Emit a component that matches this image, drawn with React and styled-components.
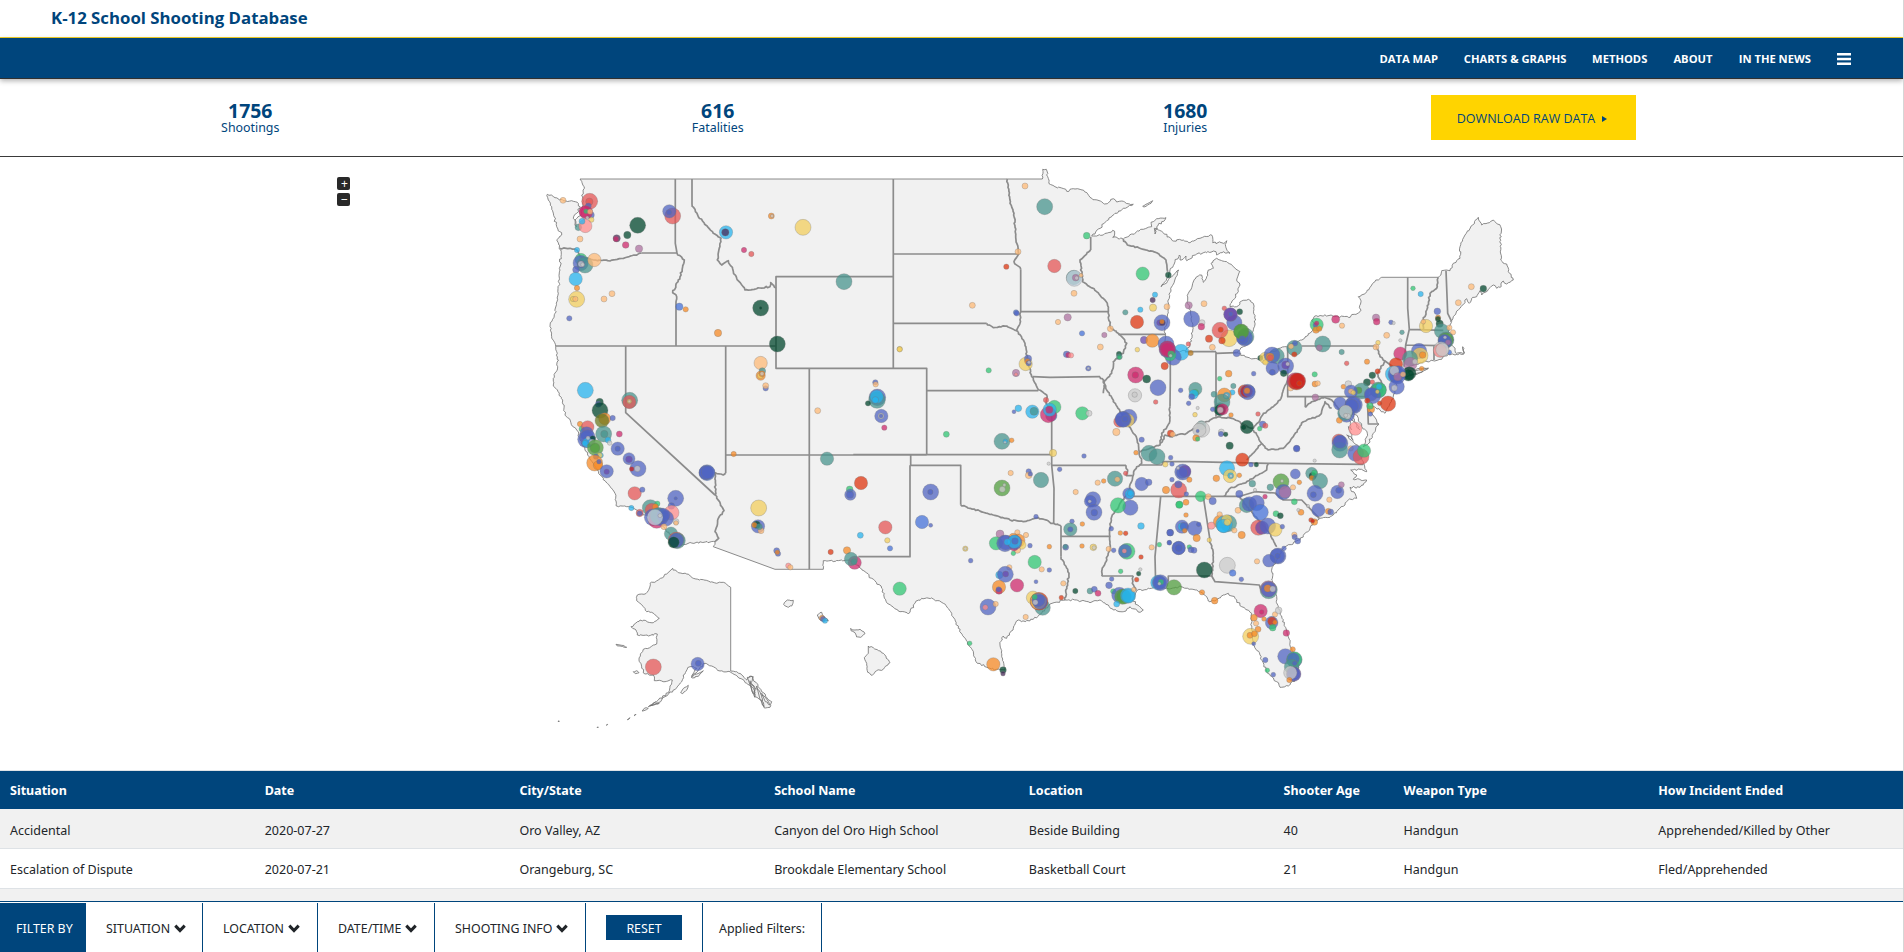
import React from 'react';
import styled, { createGlobalStyle } from 'styled-components';

const navy = '#00457c';
const sans = '"Open Sans", "Noto Sans", sans-serif';
const ui = '"Noto Sans", "Open Sans", sans-serif';

const Global = createGlobalStyle`
  * { box-sizing: border-box; }
  body { margin: 0; background: #fff; color: #212529; font-family: ${ui}; overflow: hidden; }
`;
const Page = styled.div`
  height: 952px;
  display: flex;
  flex-direction: column;
  border-right: 1px solid #d6d6d6;
  overflow: hidden;
`;
const Brand = styled.header`
  height: 38px;
  flex: none;
  padding: 0 0 0 51px;
  border-bottom: 1px solid #f2d024;
  color: ${navy};
  font: 700 16.8px/35px ${sans};
  white-space: nowrap;
`;
const Nav = styled.nav`
  height: 41px;
  flex: none;
  display: flex;
  align-items: center;
  justify-content: flex-end;
  gap: 25.3px;
  padding: 2px 52px 0 0;
  background: ${navy};
  border-bottom: 1px solid #303030;
  box-shadow: 0 2px 5px rgba(0, 0, 0, 0.3);
`;
const NavLink = styled.a`
  color: #fff;
  font: 700 11.2px/20px ${sans};
  white-space: nowrap;
  width: ${(p) => p.$w}px;
`;
const Burger = () => (
  <svg width="14" height="12" viewBox="0 0 14 12" fill="#fff">
    <rect width="14" height="2.5" />
    <rect y="4.8" width="14" height="2.5" />
    <rect y="9.5" width="14" height="2.5" />
  </svg>
);
const Stats = styled.section`
  height: 78px;
  flex: none;
  display: grid;
  grid-template-columns: repeat(4, 467.5px);
  padding-left: 16px;
  border-bottom: 1px solid #3a3a3a;
`;
const Stat = styled.div`
  padding: 22px 0 0 1px;
  text-align: center;
  color: ${navy};
  font: 400 12.4px/14px ${ui};
`;
const Figure = styled.div`
  font: 700 19.4px/19px ${ui};
  padding-bottom: 1px;
`;
const Download = styled.button`
  width: 205px;
  height: 45px;
  margin: 16px 0 0 12px;
  padding: 2px 2px 0 0;
  border: 0;
  background: #ffd400;
  color: ${navy};
  font: 400 12.5px/20px ${sans};
  display: flex;
  align-items: center;
  justify-content: center;
  gap: 7px;
  white-space: nowrap;
`;
const Arrow = styled.i`
  border: solid transparent;
  border-width: 3px 0 3px 5px;
  border-left-color: ${navy};
`;
const MapArea = styled.section`
  height: 613px;
  flex: none;
  position: relative;
`;
const MapSvg = styled.svg`
  display: block;
`;
const ZoomControls = styled.div`
  position: absolute;
  left: 337px;
  top: 20px;
  display: grid;
  gap: 3px;
`;
const ZoomButton = styled.button`
  width: 13px;
  height: 13px;
  padding: 1px 0 0 2px;
  border: 0;
  border-radius: 2px;
  background: #292929;
  color: #fff;
  font: 400 12px/12px ${ui};
`;
const Table = styled.div`
  flex: none;
  height: 131px;
  overflow: hidden;
  border-top: 1px solid #dee2e6;
`;
const Row = styled.div`
  display: grid;
  grid-template-columns: repeat(5, 1fr) 120px repeat(2, 1fr);
  height: ${(p) => (p.$head ? 38 : 40)}px;
  background: ${(p) => (p.$head ? navy : p.$striped ? '#f1f1f1' : '#fff')};
  color: ${(p) => (p.$head ? '#fff' : '#212529')};
  font: ${(p) => (p.$head ? 700 : 400)} 12.5px/${(p) => (p.$head ? 39 : p.$striped ? 43 : 41)}px ${ui};
  border-bottom: ${(p) => (p.$head ? 0 : 1)}px solid #dee2e6;
`;
const Cell = styled.div`
  padding-left: 10px;
  white-space: nowrap;
`;
const FilterBar = styled.footer`
  flex: none;
  height: 51px;
  display: flex;
  padding-top: 1px;
  border-top: 1px solid ${navy};
  background: #fff;
`;
const Filter = styled.div`
  width: ${(p) => p.$w}px;
  display: flex;
  align-items: center;
  justify-content: ${(p) => (p.$center ? 'center' : 'flex-start')};
  gap: 4px;
  padding-top: ${(p) => (p.$center ? 0 : 2)}px;
  padding-left: ${(p) => (p.$center ? 0 : p.$pad || 20)}px;
  border-right: 1px solid ${navy};
  background: ${(p) => (p.$active ? navy : 'transparent')};
  color: ${(p) => (p.$active ? '#fff' : '#212529')};
  font: 400 12.4px/20px ${ui};
  white-space: nowrap;
`;
const Reset = styled.button`
  width: 76px;
  height: 25px;
  border: 0;
  background: ${navy};
  color: #fff;
  font: 400 12.4px/20px ${ui};
  padding: 2px 0 0;
`;
const Chevron = () => (
  <svg width="12" height="9" viewBox="0 0 12 9">
    <path d="M1.3 1.6 L6 6.6 L10.7 1.6" fill="none" stroke="#212529" strokeWidth="3" />
  </svg>
);

// Each sheet has its own origin; sheet coordinates are thirds of a pixel.
const SHEETS = {
  NW: [530, 160], SW: [530, 350], AK: [540, 560], NC: [890, 160],
  GL: [1080, 220], NE: [1280, 200], SC: [890, 380], SE: [1160, 400],
};

const project = (sheet, text) => {
  const [ox, oy] = SHEETS[sheet];
  return text.trim().split(/\s+/).map((pair) => {
    const [x, y] = pair.split(',').map(Number);
    return [ox + x / 3, oy + y / 3];
  });
};

// Small deterministic wobble that gives coasts and rivers a natural edge.
const roughen = (pts, amount) => {
  let seed = 7;
  const rnd = () => {
    seed = (seed * 16807) % 2147483647;
    return seed / 2147483647 - 0.5;
  };
  const out = [pts[0]];
  for (let i = 1; i < pts.length; i += 1) {
    const [ax, ay] = pts[i - 1];
    const [bx, by] = pts[i];
    const len = Math.hypot(bx - ax, by - ay);
    const straight = len > 45;
    const n = straight ? 1 : Math.max(1, Math.round(len / 2));
    for (let k = 1; k <= n; k += 1) {
      const t = k / n;
      const j = straight || k === n ? 0 : amount;
      out.push([ax + (bx - ax) * t + rnd() * j, ay + (by - ay) * t + rnd() * j]);
    }
  }
  return out;
};
const toPath = (pts) => 'M' + pts.map(([x, y]) => `${x.toFixed(1)} ${y.toFixed(1)}`).join('L');

const MAINLAND = [
  ['NW', '150,57 1090,57'],
  ['NC', '457,57 458,28 469,28 473,50 478,72 495,80 515,84 530,94 550,86 580,90 600,112 640,130 655,128 670,116 680,126 700,124 730,133 705,145 675,160 650,182 625,207 605,228 620,228 640,225 668,211 674,222 668,232 700,237 725,222 760,208 785,200 783,187 800,176 828,173 815,185 800,200 795,222 793,205 820,218 850,243 880,240 900,248 930,235'],
  ['GL', '395,45 398,68 435,68 440,62 437,80 450,100 430,95 410,105 408,95 380,98 350,102 320,122 318,108 300,120 298,105 285,125 270,150 265,172 255,185 243,200 262,185 296,150 288,170 272,205 265,240 262,290 255,330 256,345 258,370 270,390 300,395 315,392 330,375 338,330 335,290 322,245 325,220 338,190 355,168 365,165 370,187 380,170 385,150 400,145 393,130 410,115 440,125 460,140 480,155 470,180 480,195 475,215 460,240 450,260 470,260 485,243 505,238 520,250 527,300 515,340 508,365 490,380 470,398 495,410 535,418 560,400 600,385'],
  ['NE', '20,440 65,420 100,390 105,375 95,360 105,348 150,346 205,352 240,335 243,305 235,290 260,275 285,245 305,232 475,232 485,212 510,212 520,190 540,175 540,140 555,105 595,52 605,75 640,60 662,80 662,180 680,192 685,215 700,240 680,252 670,243 660,262 650,265 640,255 625,268 605,285 600,272 590,290 575,295 568,310 560,296 555,308 540,325 520,350 510,375 505,395 515,400 520,420 505,425 520,440 530,460 553,458 548,440 552,462 525,465 505,462 485,478 460,482 420,487 395,497 375,508 445,505 415,520 370,530 350,545 345,580 330,610 315,640 300,630 280,620 262,585 262,610 275,640 297,672 280,700 262,735 250,740 262,700 245,680 230,645 215,640 240,690 222,665 205,650 215,690 205,680 220,720 200,705 240,745'],
  ['SE', '600,160 610,185 620,215 600,208 572,210 590,225 580,238 620,240 600,262 570,262 590,295 565,300 540,325 520,345 510,352 480,355 462,362 450,385 420,420 370,445 350,480 338,500 335,540 345,580 355,620 375,680 395,745 415,790 415,830 385,858 360,862 350,845 320,815 300,765 280,735 275,690 275,640 245,620 225,595 205,580 190,585 165,603 145,603 140,590 110,570 65,560 20,565'],
  ['SC', '800,620 775,625 740,632 735,645 725,660 760,690 750,697 720,680 700,695 670,690 655,675 630,660 600,668 560,660 525,660 480,672 455,700 430,718 395,725 385,720 370,745 350,775 340,768 330,795 335,830 345,870 320,868 290,862 262,850 240,800 205,745 185,700 160,670 130,657 95,655 75,670 55,702'],
  ['AK', '1080,155 1040,128 1025,85 995,55 950,15'],
  ['SW', '970,632 880,632 880,658 735,658 550,590 555,575 445,583 430,565 405,535 370,505 340,495 320,480 290,470 258,467 255,430 240,410 210,375 190,340 165,300 150,270 140,240 105,195 98,150 70,105 70,85 83,50 82,10'],
  ['NW', '77,560 65,530 60,500 75,460 85,400 90,330 92,270 80,240 95,225 80,200 65,140 55,120 52,103 75,113 100,122 125,122 145,130 150,145 130,175 140,200 135,180 155,160 160,125 155,105 163,80 150,57'],
];

const ISLANDS = [
  ['AK', '398,25 415,38 440,42 460,55 505,63 530,70 550,67 572,82 572,333 590,335 605,345 620,360 633,348 650,370 665,395 695,425 690,442 672,443 665,420 645,410 640,385 620,370 600,355 572,337 540,333 520,320 495,310 475,330 455,350 470,325 450,320 430,345 425,365 400,390 375,410 355,428 325,440 355,420 385,398 390,378 397,360 375,365 343,362 340,345 315,342 305,325 297,300 310,268 350,252 352,222 325,228 292,225 288,210 273,200 300,180 340,188 358,175 335,157 320,155 310,140 290,122 292,105 312,103 325,92 330,70 355,60 380,42'],
  ['AK', '733,128 742,120 760,121 755,138 745,142 731,134'],
  ['AK', '832,165 845,157 852,170 865,183 850,183 838,178'],
  ['AK', '932,205 945,210 960,208 975,221 965,230 950,231 945,218 933,212'],
  ['AK', '985,258 1000,263 1030,280 1050,308 1030,328 1010,332 997,346 983,337 980,315 973,293 985,280'],
  ['AK', '228,253 240,258 260,262 245,256'],
  ['AK', '280,335 290,332 297,338 286,341'],
  ['AK', '422,398 435,382 445,376 440,390 428,401'],
  ['AK', '454,352 470,342 490,332 478,345 458,354'],
  ['AK', '622,352 640,350 632,370 648,388 640,402'],
  ['AK', '630,362 642,382 644,412 636,395'],
  ['AK', '650,378 662,402 672,440 660,418'],
  ['AK', '665,400 680,418 690,435 676,425'],
  ['AK', '306,453 318,443 325,445 312,452'],
  ['AK', '330,437 345,428 358,430 340,436'],
  ['AK', '262,479 270,473 266,478'],
  ['AK', '282,466 288,463 284,467'],
  ['AK', '54,483 58,483 56,486'],
  ['AK', '171,502 175,501 173,504'],
  ['AK', '199,495 203,493 201,496'],
  ['NC', '758,139 788,122 783,130 762,141'],
  ['NE', '385,515 445,505 420,518 390,525'],
];

const BORDERS = [
  ['NW', '436,57 436,250 441,279'], ['NW', '438,432 438,558'], ['NW', '77,558 738,558'],
  ['NW', '287,558 287,758 555,1005'], ['NW', '587,558 587,940'], ['NW', '486,57 486,132'],
  ['NW', '1090,350 738,350 738,625 1190,625 1190,884'], ['NW', '1090,57 1090,625'],
  ['NW', '335,279 441,279'], ['SW', '587,315 1190,315'], ['SW', '838,55 838,658'],
  ['SC', '-110,224 485,224'], ['SC', '62,224 62,256 212,256 212,374'], ['SC', '60,256 60,530 -95,530'],
  ['SC', '110,32 445,32'], ['SC', '485,95 485,256 492,325 491,432'], ['SC', '513,437 513,530'],
  ['SC', '485,256 708,256'], ['SC', '708,287 728,287'], ['SC', '513,469 660,469'], ['SC', '635,588 730,588'],
  ['SC', '748,255 815,255 820,245 900,245'], ['SE', '90,185 325,190 610,193'],
  ['SC', '730,349 1050,349'], ['SE', '240,289 285,275 345,279 370,300 425,300 478,355'],
  ['SC', '812,349 795,530 797,615'], ['SE', '25,545 25,528 155,528 165,545 298,555 302,568 325,560'],
  ['SE', '130,290 150,420'], ['SC', '841,0 840,80'], ['GL', '271,390 271,485'],
  ['GL', '408,395 408,590'], ['GL', '315,395 408,395'], ['GL', '408,400 470,398'],
  ['NE', '23,440 23,590 262,590'], ['NE', '65,438 290,438'],
  ['NE', '383,232 383,325 388,388 377,435 372,500'], ['NE', '388,388 490,391'],
  ['NE', '377,435 480,437'], ['NE', '462,437 462,480'], ['NE', '498,212 503,340 515,365'],
  ['NE', '315,483 345,505'], ['NE', '262,590 265,672 295,672'], ['NE', '76,590 76,622'],
  ['NC', '10,282 385,282'], ['NC', '392,328 392,455 654,455'], ['NC', '10,490 290,490'],
  ['NC', '428,650 480,652 630,650'], ['NC', '602,230 602,270'], ['NC', '685,523 827,523'],
];

const RIVERS = [
  ['NW', '90,265 120,265 140,270 150,290 190,300 240,303 290,292 335,279'],
  ['NW', '441,279 463,300 450,350 428,398 440,410 438,432'],
  ['NW', '486,132 505,170 550,220 573,235 562,300 575,315 595,302 620,355 645,390 720,380 722,368 738,384'],
  ['SW', '587,370 580,375 555,368 556,435 582,482 565,505 555,545 566,565 555,575'],
  ['SC', '212,374 240,385 310,405 360,420 400,425 445,413 490,430 513,437'],
  ['NC', '385,515 405,550 412,600 425,650 445,689 470,705 468,730 485,755'],
  ['SC', '513,530 537,580 530,620 525,660'],
  ['SC', '708,256 713,270 708,287'],
  ['SC', '640,0 650,30 690,95 740,175 748,215 755,250 740,260 728,290 715,340 690,370 665,410 658,450 660,510 640,560 635,588'],
  ['SC', '730,588 727,610 738,632'],
  ['SE', '325,190 320,210 250,250 210,265 192,289'],
  ['SE', '150,420 160,460 155,528'],
  ['SE', '240,289 260,320 295,360 325,395 350,440'],
  ['SC', '748,215 780,205 810,195 825,165 840,170 890,160 930,135 960,120 990,110 1025,115 1065,135 1090,145 1110,120 1120,100 1150,80 1170,60 1180,30 1193,0'],
  ['SC', '840,80 838,130 815,160 810,195'],
  ['NE', '290,438 300,470 315,483 290,520 310,560 262,590'],
  ['NE', '475,232 470,265 450,280 440,330 430,360 430,388'],
  ['NE', '76,622 95,605 135,592 155,600 175,625 205,650'],
  ['NE', '155,625 135,605 120,645 70,665 40,710 10,745 -35,750 -55,730 -80,690'],
  ['SE', '305,130 260,180'],
  ['NC', '352,57 360,130 372,160 378,240 386,282 372,305 392,328'],
  ['NC', '290,490 310,503 350,498 385,515'],
  ['NC', '392,455 390,490 380,510'],
  ['NC', '630,650 645,665'],
  ['NC', '602,270 570,300 578,365 620,395 652,430 660,500 690,525 710,550 700,580 670,605 665,640 642,665 640,700'],
  ['NC', '700,237 712,255 800,278 828,300 833,335'],
];

const COLORS = {
  b: '#5064c2', B: '#4671d8', r: '#e45656', d: '#02472e', t: '#48948e', o: '#f58a25', e: '#fdba77',
  s: '#27b3ed', y: '#f2cd5d', g: '#30c573', m: '#cd2a6c', R: '#dd3510', k: '#ff8c8c', v: '#ad71a0',
  w: '#cacaca', G: '#529d3f', p: '#6a4aac', P: '#4a2c5a', c: '#c91f1f', O: '#b7791f', n: '#c4d0dc', l: '#6d7a22',
};

// Incidents per sheet as x,y,radius,colour.
const INCIDENTS = {
  NW: `99,121,9,e 179,124,24,r 178,125,11,r 175,138,9,b 183,165,10,b 184,179,8,y 168,157,20,m 165,155,18,m 168,154,7,g 180,155,8,e 172,173,5,w
    145,202,10,t 166,198,20,k 156,184,9,s 150,237,9,e 323,196,24,d 292,225,11,d 260,235,11,P 258,237,8,m 287,255,10,m 327,266,11,v
    428,168,24,r 418,154,20,b 417,157,8,b 141,270,8,s 153,298,18,g 152,309,23,b 165,315,24,t 153,313,11,b 153,312,9,w 158,314,6,w 193,300,20,e
    138,329,10,b 137,357,20,s 141,384,8,o 140,418,24,y 129,417,8,y 136,417,8,e 222,417,9,e 246,401,9,e 118,475,8,b
    448,440,11,B 467,448,8,o 564,519,11,o 588,217,20,s 586,217,11,P 642,270,8,m 664,282,8,r 724,168,9,o 726,168,5,w 819,202,24,y
    942,365,24,t 692,444,24,d 692,444,5,d 742,552,24,d 1109,567,8,y`,
  SW: `692,39,20,e 697,63,10,t 692,77,14,o 691,77,9,y 696,71,9,o 696,71,6,w 707,115,8,b 707,107,9,e 863,182,9,e 611,312,8,o
    166,121,24,s 209,156,11,d 205,163,9,b 210,181,24,d 224,206,18,o 216,212,21,l 248,204,8,b 150,222,8,o 155,237,8,g 173,231,19,r 170,250,20,b 168,268,25,b 173,262,23,b 188,266,9,d 173,278,15,s 165,280,9,s 186,277,9,w 174,264,6,w 221,252,24,t 223,252,11,t 234,270,9,s 239,279,7,w
    268,252,9,m 263,296,20,b 263,296,8,b 196,293,24,G 195,294,15,G 212,316,8,s 209,316,8,y 198,320,8,b 194,339,24,o 204,346,14,o 207,335,7,b
    297,326,18,b 297,328,10,p 324,356,24,b 322,356,9,w 305,357,7,c 230,364,20,b 230,365,8,p 299,151,24,t 298,156,20,r 298,154,7,y 298,154,4,w
    531,368,24,B 529,368,21,b 528,368,21,b 534,367,20,b 314,430,20,r 337,419,8,b 437,445,24,b 437,445,5,b 424,468,10,b 361,473,24,t 382,461,8,g 365,480,20,r 376,470,9,o 304,474,8,s 329,489,11,r 329,490,8,b
    425,488,22,k 368,502,25,b 380,510,25,m 389,500,27,b 384,497,24,t 408,505,23,b 400,495,20,b 375,502,24,n 390,497,6,w 402,530,9,e 438,515,9,w 438,519,7,e 423,551,20,t 439,570,24,r 442,572,24,t 439,571,22,b 431,577,17,d
    686,474,24,y 684,529,20,b 693,542,9,e 680,524,11,d 673,525,8,o 688,530,9,t 740,602,9,b 744,611,8,b 742,607,7,o 775,647,8,k 781,652,8,e
    1036,97,8,b 1037,103,8,e 1042,142,25,b 1041,150,25,t 1014,160,8,d 1040,140,20,s 1036,150,10,s 1054,198,20,b 1053,198,9,w 1053,198,6,b 1063,233,8,m
    891,326,20,t 993,399,20,R 959,418,10,g 961,434,17,b 960,434,11,b 1066,532,20,r 991,556,9,s 1072,571,8,y 1080,595,8,B 902,606,8,R 951,601,11,o 974,638,20,m 963,627,20,t 972,635,9,t`,
  AK: `1079,86,20,g 340,321,24,r 473,312,20,b 475,310,9,b 846,174,8,o 849,177,8,b 855,182,8,s`,
  NC: `405,78,9,e 464,140,24,t 590,227,10,g 384,275,9,e 349,320,8,R 493,318,20,r 247,436,9,e 378,457,8,B 380,460,8,b 551,353,22,t 553,355,24,n 557,353,10,v 560,354,6,w 573,346,6,e
    552,400,9,e 533,472,11,v 504,486,8,e 576,520,8,B 643,525,8,v 661,506,9,e 631,561,9,e 530,583,10,b 535,585,8,m 543,586,8,k 595,625,8,b 595,625,4,w
    29,568,8,y 296,631,8,g 378,639,11,v 378,643,5,k 407,612,20,y 414,596,11,b 412,604,8,o 416,610,8,b 417,607,5,w
    758,341,20,g 835,345,9,d 795,404,8,s 788,420,8,P 789,443,11,y 831,440,9,e 751,449,8,s 706,457,8,t 741,486,20,R 816,488,24,b 809,488,9,p 817,488,9,P 816,485,7,o
    762,540,11,p 787,542,20,o 742,569,7,y 687,582,8,d 688,590,9,t 688,592,6,g 873,577,24,s 828,552,24,b 850,592,24,b 840,585,18,g 832,568,25,b 832,567,24,m 832,568,20,m 843,582,10,g 842,587,5,w
    902,579,8,O 824,618,11,R 737,645,24,m 736,645,10,m 770,657,12,d 804,683,24,b 735,706,20,w`,
  GL: `326,256,11,v 372,251,9,e 335,297,24,b 366,308,9,w 364,320,10,m 325,372,7,r 387,356,11,R 397,382,9,e 433,265,7,r 479,275,9,d 447,355,25,y 420,331,24,r 422,329,8,R 426,362,10,R 463,308,23,b 452,284,20,p 451,283,20,p 452,282,7,b
    497,350,25,t 494,354,24,b 488,356,18,b 484,335,23,G 483,335,22,G 487,357,10,b 470,399,11,b 541,414,8,d 555,414,17,y 590,408,23,t 576,405,24,b 570,411,12,o 571,413,9,r 578,445,20,b 556,427,8,y 577,457,9,b
    446,461,10,o 419,476,7,g 521,461,7,b 460,498,8,t 457,517,8,s 402,523,9,t 433,525,21,o 440,527,10,s 438,528,7,w 494,514,20,R 503,516,23,b 500,514,18,c 507,514,18,b 501,512,9,o
    346,507,20,t 346,518,10,g 341,523,14,s 335,530,9,b 302,511,7,b`,
  NE: `110,374,20,g 106,375,7,b 110,370,7,m 108,390,10,o 118,386,8,o 167,358,12,m 186,377,8,e 288,353,11,v 290,365,10,m 333,367,7,b 341,369,5,w 320,406,9,e 366,397,7,t 361,421,5,w 294,428,7,y 288,441,9,e
    43,444,23,t 45,430,8,b 33,439,8,e 43,463,8,R 128,432,24,t 118,443,9,v 185,456,8,t 200,490,7,r 261,485,8,o 104,523,8,g 105,552,9,o 113,550,8,e 32,564,9,e 17,498,24,b 17,495,12,p 23,492,6,w 11,520,10,d 46,543,25,m 50,545,25,R 53,543,24,c 58,550,8,R
    293,514,8,R 277,526,10,d 261,547,11,d 277,546,7,r 190,560,7,o 205,552,10,w 106,592,10,v 245,573,24,t 236,571,10,G 213,575,20,b 213,574,8,e 220,578,7,y 290,572,20,b 295,570,24,t 297,570,22,g 278,587,24,b 273,583,20,b 297,560,9,s 292,575,6,y 262,602,8,R
    324,611,23,R 299,610,7,R 273,628,11,o 270,618,10,g 271,642,7,b 180,611,20,b 221,615,26,b 219,615,24,b 215,618,20,b 200,643,24,b 178,661,9,o 195,640,22,t 197,635,20,w 203,649,9,w 197,646,6,w 226,686,20,k 176,722,20,r 180,730,24,b 179,750,24,t 180,725,20,b 212,745,8,e 50,745,9,b 227,760,24,b 243,770,24,r 252,752,20,g
    399,265,7,g 422,282,8,s 472,334,10,b 474,353,8,o 474,357,8,d 479,371,11,d 438,378,20,y 430,365,7,e 485,393,22,t 508,383,8,e 519,397,8,e 498,420,24,t 498,420,22,G 496,425,20,b 493,422,19,b 495,412,5,w 504,427,8,v 508,457,7,B 483,448,23,w 480,452,20,k 487,449,20,w
    417,453,23,b 416,455,9,b 420,467,24,y 428,465,10,o 361,461,20,m 390,475,23,t 391,492,20,v 405,485,8,w 425,506,7,o 388,520,20,d 385,525,18,d 348,493,20,R 340,522,24,s 349,523,25,b 352,528,24,b 356,517,20,b 350,560,23,b 343,564,9,w 343,512,14,w 353,530,12,v 369,523,8,e 574,260,9,e 610,266,10,d 535,308,9,e`,
  SC: `169,163,9,g 372,95,6,b 385,85,10,s 427,95,20,s 432,94,12,t 468,60,8,r 484,107,17,b 493,81,20,g 475,104,24,m 479,89,20,s 478,89,11,m 577,100,20,g 597,100,9,w 336,184,24,t 365,181,7,o 346,184,7,s 345,187,4,w
    489,219,11,y 582,228,7,b 509,268,7,b 476,251,5,w 362,279,8,e 416,274,8,b 416,286,10,e 421,282,7,b 453,300,23,t 336,324,24,G 337,328,9,w 343,315,5,w 122,336,24,b 121,336,8,b 96,426,20,B 122,436,6,b 438,410,7,b 330,462,12,v
    707,280,7,r 675,296,23,t 682,298,8,e 623,308,8,e 641,303,7,o 557,336,8,e 609,358,23,b 601,364,18,b 599,364,5,w 612,397,24,b 613,398,10,b 577,432,7,o 546,424,7,b 541,448,20,t 541,448,8,b
    318,490,20,g 408,465,8,e 382,457,8,e 385,482,20,o 370,475,15,o 395,495,13,y 382,510,10,e 372,500,13,m 345,490,25,b 347,488,22,b 374,487,22,b 373,485,20,s 352,486,10,s 375,483,10,b 370,520,7,g 420,497,7,b 478,500,7,o 527,502,9,b 526,500,7,t 576,498,7,o 610,502,10,y 612,503,6,w 226,506,8,y 226,506,5,w 242,542,7,b
    434,546,20,g 455,568,8,e 478,570,7,b 358,562,8,e 328,585,11,s 346,583,24,b 347,582,9,p 381,616,20,m 327,621,20,o 327,633,10,m 326,628,8,b 438,605,6,b 520,610,8,e 294,681,24,b 286,682,8,k 317,672,8,e
    458,683,23,t 429,653,20,y 447,664,27,R 445,664,24,y 450,666,22,b 445,660,20,b 436,667,8,w 434,651,8,g 514,653,7,R 556,633,8,d 407,711,8,e 600,633,9,t 613,628,9,b 624,640,9,m 239,790,7,g 310,853,20,o 339,870,10,d 339,881,7,P
    688,125,17,r 717,112,24,b 713,121,20,y 700,118,24,b 698,118,23,b 705,117,9,b 679,156,11,e 797,66,7,r 734,44,8,w 755,179,8,b 738,218,7,o 777,220,24,t 801,230,24,t 842,160,10,R 848,163,8,e
    755,312,20,b 776,307,10,b 716,341,18,b 719,342,14,s 721,340,9,s 721,383,23,b 684,376,23,g 753,438,10,s 664,446,7,b 691,459,7,o 707,460,7,R 656,507,8,e 671,511,7,b 711,514,24,g 705,513,20,b 703,513,7,k 753,531,7,R 785,502,8,e
    692,574,7,g 746,581,7,d 751,568,5,w 740,599,7,R 665,597,7,b 657,616,10,b 670,634,8,g 688,645,23,b 697,650,23,G 702,650,22,G 714,647,23,s 715,648,20,s 680,672,9,s 731,629,7,e 804,608,22,s 811,608,24,b 810,608,20,b 813,606,8,g 808,611,5,w
    808,494,7,g 838,488,7,b 841,458,10,b 866,504,20,b 866,504,10,b 868,374,10,g`,
  SE: `186,6,24,t 180,27,19,t 180,30,17,d 188,28,17,m 181,30,9,w 158,28,7,b 86,10,7,b 105,44,7,y 213,45,7,o 113,24,5,w 124,76,14,t 125,88,24,w 118,90,20,w 113,93,5,b 108,114,10,o 113,117,7,g 184,96,9,w 183,102,8,b 197,103,7,d 261,81,20,d 251,82,8,d 308,73,10,b 316,77,8,r 299,86,7,g 294,42,7,r 209,137,11,d 410,146,10,b
    247,179,20,R 273,194,7,b 289,194,7,d 201,205,23,s 210,228,20,y 212,227,9,s 213,228,5,w 238,226,7,o 169,235,10,o 68,216,24,b 75,214,18,p 66,218,17,b 54,204,5,w 32,173,7,b 36,192,7,b 16,193,8,y 36,239,7,b 88,239,8,o 56,270,24,r 55,253,11,b 18,270,11,o 79,282,7,b 122,289,16,g 145,290,9,e 158,303,11,b 58,314,11,g 78,307,9,o 78,345,7,o
    66,380,20,b 66,380,12,s 72,379,12,b 74,392,7,o 104,385,22,b 116,373,7,b 110,414,11,o 30,398,10,b 56,444,20,b 56,444,10,b 88,441,7,g 93,449,9,b 102,451,9,b 28,428,7,b 277,251,10,t 331,262,10,t 285,270,5,w 238,282,11,b 205,370,25,t 180,365,20,o 179,343,8,e 192,373,25,s 200,360,16,y 190,378,20,s 202,367,10,y 154,377,11,k 245,405,11,o 223,391,8,e 234,331,9,e 148,420,7,y
    260,316,22,t 268,312,22,b 290,309,23,b 315,290,7,m 301,337,24,B 295,383,23,r 306,383,20,p 323,378,24,b 346,389,20,y 367,380,7,b 348,341,9,g 361,347,9,d 403,305,9,g 423,337,9,o 415,330,5,w 444,318,5,w 363,245,24,G 366,243,5,w 370,276,23,b 375,276,18,v 399,262,8,e 406,222,15,b 418,247,7,o 455,220,18,t 458,228,11,d 456,234,8,o 463,219,9,g 480,243,23,t 465,280,24,b 460,284,9,b 532,276,20,b 536,271,9,b 544,254,9,v
    508,299,8,e 475,330,20,b 505,334,9,o 512,336,9,b 464,182,5,w 453,360,7,R 463,366,10,o 458,363,6,c 403,404,8,e 404,411,8,b 413,423,9,b 354,468,24,b 352,468,22,b 353,468,8,b 327,482,19,b 372,445,7,b 291,484,8,e 202,496,24,w 218,519,10,B 244,538,7,b 133,510,24,d 42,562,23,G 126,577,8,o 164,602,10,o
    326,570,26,t 325,566,24,v 326,568,23,b 323,565,11,o 338,567,9,w 302,633,20,m 305,636,7,m 345,643,8,e 356,631,10,w 282,653,10,o 288,670,8,e 312,657,7,o 335,668,19,b 336,664,13,R 345,667,7,o 338,683,10,g 294,688,9,o 272,709,24,y 270,706,9,o 283,701,9,o 281,731,6,b 379,699,10,m 398,748,8,o
    376,769,23,b 403,780,23,b 403,778,23,g 400,776,18,b 395,800,22,t 401,822,22,p 401,822,20,b 391,818,20,w 388,840,8,o 404,790,7,b 316,780,8,b 322,811,7,g 340,824,7,b`,
};

const mainland = MAINLAND.flatMap(([s, t]) => project(s, t));
const landPath = toPath(roughen(mainland, 2)) + 'Z';
const islandPath = ISLANDS.map(([s, t]) => toPath(roughen(project(s, t), s === 'AK' ? 1.7 : 0.6)) + 'Z').join('');
const borderPath = BORDERS.map(([s, t]) => toPath(project(s, t))).join('');
const riverPath = RIVERS.map(([s, t]) => toPath(roughen(project(s, t), 1.5))).join('');
const dots = Object.entries(INCIDENTS).flatMap(([sheet, text]) =>
  text.trim().split(/\s+/).map((item) => {
    const [x, y, r, c] = item.split(',');
    return { x: SHEETS[sheet][0] + x / 3, y: SHEETS[sheet][1] + y / 3, r: r / 3, c: COLORS[c] };
  }),
);

const IncidentMap = () => (
  <MapSvg width="1903" height="613" viewBox="0 157 1903 613">
    <g fill="#f1f1f1" stroke="#6e6e6e" strokeWidth="0.8" strokeLinejoin="round">
      <path d={landPath} />
      <path d={islandPath} />
    </g>
    <g fill="none" stroke="#8c8c8c" strokeWidth="1.7" strokeLinejoin="round">
      <path d={borderPath} />
      <path d={riverPath} />
    </g>
    <g fillOpacity="0.75" stroke="#777" strokeOpacity="0.5" strokeWidth="0.6">
      {dots.map((d, i) => (
        <circle key={i} cx={d.x} cy={d.y} r={d.r} fill={d.c} />
      ))}
    </g>
  </MapSvg>
);

const NAV = [['DATA MAP', 59], ['CHARTS & GRAPHS', 103], ['METHODS', 56], ['ABOUT', 40], ['IN THE NEWS', 73]];
const STATS = [['1756', 'Shootings'], ['616', 'Fatalities'], ['1680', 'Injuries']];
const HEAD = ['Situation', 'Date', 'City/State', 'School Name', 'Location', 'Shooter Age', 'Weapon Type', 'How Incident Ended'];
const ROWS = [
  ['Accidental', '2020-07-27', 'Oro Valley, AZ', 'Canyon del Oro High School', 'Beside Building', '40', 'Handgun', 'Apprehended/Killed by Other'],
  ['Escalation of Dispute', '2020-07-21', 'Orangeburg, SC', 'Brookdale Elementary School', 'Basketball Court', '21', 'Handgun', 'Fled/Apprehended'],
  [],
];
const FILTERS = [['SITUATION', 117], ['LOCATION', 115], ['DATE/TIME', 117], ['SHOOTING INFO', 151]];

export default function App() {
  return (
    <Page>
      <Global />
      <Brand>K-12 School Shooting Database</Brand>
      <Nav>
        {NAV.map(([label, w]) => <NavLink key={label} $w={w}>{label}</NavLink>)}
        <Burger />
      </Nav>
      <Stats>
        {STATS.map(([n, label]) => (
          <Stat key={label}><Figure>{n}</Figure>{label}</Stat>
        ))}
        <Download>DOWNLOAD RAW DATA <Arrow /></Download>
      </Stats>
      <MapArea>
        <IncidentMap />
        <ZoomControls>
          <ZoomButton>+</ZoomButton>
          <ZoomButton>−</ZoomButton>
        </ZoomControls>
      </MapArea>
      <Table>
        <Row $head>{HEAD.map((h) => <Cell key={h}>{h}</Cell>)}</Row>
        {ROWS.map((row, i) => (
          <Row key={i} $striped={i % 2 === 0}>{row.map((c, j) => <Cell key={j}>{c}</Cell>)}</Row>
        ))}
      </Table>
      <FilterBar>
        <Filter $w={86} $active $pad={16}>FILTER BY</Filter>
        {FILTERS.map(([label, w]) => <Filter key={label} $w={w}>{label}<Chevron /></Filter>)}
        <Filter $w={117} $center><Reset>RESET</Reset></Filter>
        <Filter $w={119} $pad={16}>Applied Filters:</Filter>
      </FilterBar>
    </Page>
  );
}
